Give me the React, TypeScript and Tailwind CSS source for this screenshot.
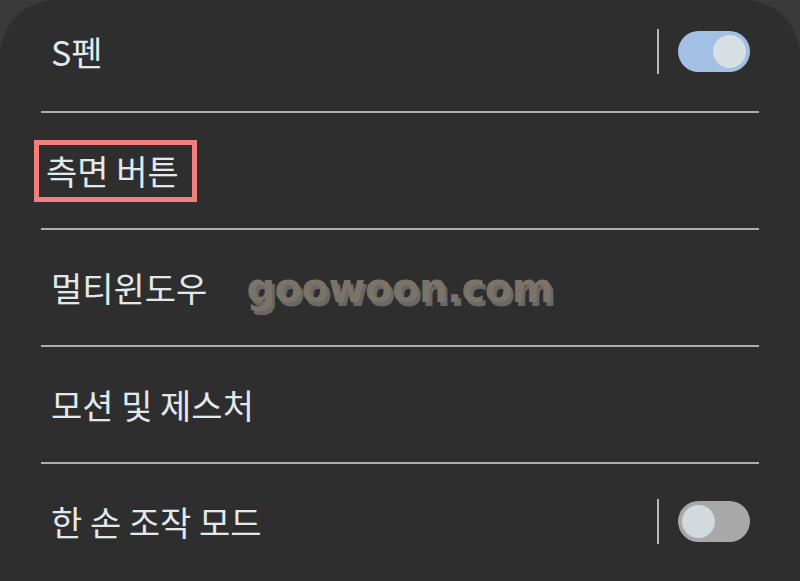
import React from 'react';

const font = { fontFamily: '"Noto Sans CJK KR", "Noto Sans", sans-serif' };

const Toggle = ({ on }: { on: boolean }) => (
  <div className="flex items-center gap-[19px]">
    <div className="w-[2px] h-[45px] bg-[#b8b8b8]" />
    <div
      className={`w-[72px] h-[41px] rounded-full flex items-center px-[4px] ${
        on ? 'bg-[#a3bfe3] justify-end' : 'bg-[#a8a8a8] justify-start'
      }`}
    >
      <div className={`w-[33px] h-[33px] rounded-full ${on ? 'bg-[#d6dfe2]' : 'bg-[#d2dadd]'}`} />
    </div>
  </div>
);

const Divider = () => <div className="mx-[41px] h-[2px] bg-[#aeaeae]" />;

export default function App() {
  return (
    <div className="w-[800px] h-[581px] bg-[#3a3a3a] overflow-hidden" style={font}>
      <div className="h-full bg-[#2e2e2e] rounded-t-[56px] text-[#e3e9eb] text-[34px]">
        <div className="h-[111px] flex items-center justify-between pl-[51px] pr-[50px] pb-[8px]">
          <span>S펜</span>
          <Toggle on />
        </div>
        <Divider />
        <div className="h-[115px] flex items-center pl-[34px]">
          <div className="border-[5px] border-[#f47f7f] pl-[7px] pr-[13px] leading-[52px]">측면 버튼</div>
        </div>
        <Divider />
        <div className="h-[115px] flex items-center pl-[51px] gap-[39px]">
          <span>멀티윈도우</span>
          <span
            className="text-[40px] font-bold text-[#7b7368] tracking-[-0.5px] [text-shadow:3px_4px_0_#686868]"
            style={{ fontFamily: '"DejaVu Sans", sans-serif' }}
          >
            goowoon.com
          </span>
        </div>
        <Divider />
        <div className="h-[115px] flex items-center pl-[51px]">
          <span>모션 및 제스처</span>
        </div>
        <Divider />
        <div className="h-[115px] flex items-center justify-between pl-[51px] pr-[50px]">
          <span>한 손 조작 모드</span>
          <Toggle on={false} />
        </div>
      </div>
    </div>
  );
}
